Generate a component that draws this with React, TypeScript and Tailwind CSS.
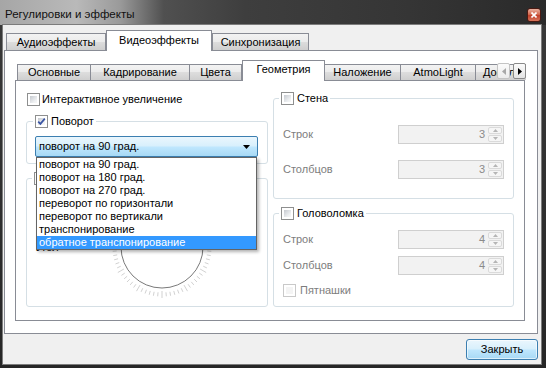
import React from 'react';

const Check = ({ checked = false, disabled = false }: { checked?: boolean; disabled?: boolean }) => (
  <div
    className={`relative w-[13px] h-[13px] shrink-0 border p-[2px] bg-white ${
      disabled ? 'border-[#c9c9c9]' : 'border-[#8e8f8f]'
    }`}
  >
    <div
      className={`w-full h-full ${
        disabled ? 'bg-[#f4f4f4]' : 'bg-[linear-gradient(135deg,#c6cad0,#eef0f2_70%,#f8f8f8)]'
      }`}
    />
    {checked && (
      <svg className="absolute inset-0" width="11" height="11" viewBox="0 0 11 11">
        <path d="M2.2 5.6 L4.4 7.9 L8.8 2.6" fill="none" stroke="#3a55a4" strokeWidth="1.7" />
      </svg>
    )}
  </div>
);

const Spin = ({ value }: { value: string }) => (
  <div className="w-[106px] h-[19px] flex border border-[#cfcfcf] bg-[#f2f2f2]">
    <div className="flex-1 text-right pr-[3px] leading-[17px] text-[#8a8a8a]">{value}</div>
    <div className="w-[15px] flex flex-col gap-px py-px pr-px">
      <div className="flex-1 flex items-center justify-center border border-[#dadada] rounded-[2px] bg-[#f6f6f6]">
        <svg width="5" height="3" viewBox="0 0 5 3">
          <path d="M0 3 L2.5 0 L5 3Z" fill="#b5b5b5" />
        </svg>
      </div>
      <div className="flex-1 flex items-center justify-center border border-[#dadada] rounded-[2px] bg-[#f6f6f6]">
        <svg width="5" height="3" viewBox="0 0 5 3">
          <path d="M0 0 L2.5 3 L5 0Z" fill="#b5b5b5" />
        </svg>
      </div>
    </div>
  </div>
);

const SpinRow = ({ label, value, className }: { label: string; value: string; className: string }) => (
  <div className={`flex items-center justify-between pl-[9px] pr-[9px] ${className}`}>
    <span className="text-[#7d7d7d]">{label}</span>
    <Spin value={value} />
  </div>
);

const GroupHead = ({ label, checked = false, className = '' }: { label?: string; checked?: boolean; className?: string }) => (
  <div className={`-mt-[7px] w-fit flex items-center gap-[3px] bg-white pl-[2px] pr-[2px] h-[13px] ${className}`}>
    <Check checked={checked} />
    {label && <span className="leading-[13px]">{label}</span>}
  </div>
);

const Dial = () => {
  const ticks = [];
  for (let i = 0; i < 72; i++) {
    const a = (i * 5 * Math.PI) / 180;
    const long = i % 6 === 0;
    const r1 = long ? 44 : 45.5;
    const r2 = long ? 51 : 49.5;
    ticks.push(
      <line
        key={i}
        x1={54 + r1 * Math.sin(a)}
        y1={54 + r1 * Math.cos(a)}
        x2={54 + r2 * Math.sin(a)}
        y2={54 + r2 * Math.cos(a)}
        stroke="#b2b2b2"
        strokeWidth="0.6"
      />
    );
  }
  return (
    <svg width="108" height="108" viewBox="0 0 108 108" className="shrink-0">
      {ticks}
      <circle cx="54" cy="54" r="41" fill="none" stroke="#6a6a6a" strokeWidth="0.9" />
    </svg>
  );
};

const outerTabs = [
  { label: 'Аудиоэффекты', cls: 'w-[100px] h-[17px] border border-b-0' },
  { label: 'Видеоэффекты', cls: 'w-[106px] h-[21px] -mb-px border border-b-0 bg-white relative z-10', sel: true },
  { label: 'Синхронизация', cls: 'w-[97px] h-[17px] border border-b-0' },
];

const innerTabs = [
  { label: 'Основные', cls: 'w-[73px] h-[16px] border-l border-t' },
  { label: 'Кадрирование', cls: 'w-[99px] h-[16px] border-l border-t' },
  { label: 'Цвета', cls: 'w-[53px] h-[16px] border-l border-t border-r' },
  { label: 'Геометрия', cls: 'w-[83px] h-[21px] -mb-px border border-b-0 bg-white relative z-10', sel: true },
  { label: 'Наложение', cls: 'w-[75px] h-[16px] border-t' },
  { label: 'AtmoLight', cls: 'w-[75px] h-[16px] border-l border-t' },
  { label: 'Дополнительно', cls: 'w-[95px] h-[16px] border-l border-t border-r' },
];

const rotations = [
  'поворот на 90 град.',
  'поворот на 180 град.',
  'поворот на 270 град.',
  'переворот по горизонтали',
  'переворот по вертикали',
  'транспонирование',
  'обратное транспонирование',
];

const tabBg = 'bg-[linear-gradient(#f3f3f3,#ebebeb_50%,#dddddd_50%,#cfcfcf)]';

export default function App() {
  return (
    <div className="w-[546px] h-[368px] flex flex-col overflow-hidden bg-[linear-gradient(#3a3a3a,#262626)] font-['Liberation_Sans',Arial,sans-serif] text-[11px] text-black">
      {/* Title bar */}
      <div className="h-[25px] shrink-0 flex bg-[linear-gradient(to_right,#a6a6a6_0%,#b9b9b9_14%,#9a9a9a_22%,#505050_30%,#3e3e3e_45%,#353535_75%,#2a2a2a_100%)]">
        <span className="pl-[5px] pt-[6px] text-[11.5px] leading-[16px] text-[#111]">Регулировки и эффекты</span>
        <div className="ml-auto mr-[5px] mt-[8px] w-[14px] h-[14px] rounded-[3px] border border-[#4a1a12] bg-[linear-gradient(#eab1a0,#d36a50_45%,#c0402a_55%,#d9765c)] flex items-center justify-center">
          <svg width="6" height="6" viewBox="0 0 6 6">
            <path d="M0.5 0.5 L5.5 5.5 M5.5 0.5 L0.5 5.5" stroke="#fff" strokeWidth="1.6" />
          </svg>
        </div>
      </div>

      {/* Client area */}
      <div className="ml-[3px] mr-[5px] h-[339px] bg-[#f0f0f0] flex flex-col shadow-[0_0_0_1px_#7c7c7c]">
        {/* Outer tabs */}
        <div className="h-[25px] flex items-end pl-[3px]">
          {outerTabs.map((t) => (
            <div
              key={t.label}
              className={`flex items-center justify-center border-[#898c95] ${t.cls} ${t.sel ? '' : tabBg}`}
            >
              <span className={t.sel ? 'pb-[2px]' : ''}>{t.label}</span>
            </div>
          ))}
        </div>

        {/* Outer pane */}
        <div className="ml-[1px] w-[534px] h-[284px] border border-[#898c95] bg-white">
          {/* Inner tabs */}
          <div className="relative ml-[10px] w-[511px] h-[29px] flex items-end pl-[2px] overflow-x-clip">
            {innerTabs.map((t) => (
              <div
                key={t.label}
                className={`shrink-0 flex items-center justify-center border-[#898c95] ${t.cls} ${t.sel ? '' : tabBg}`}
              >
                <span className={t.sel ? 'pb-[3px]' : ''}>{t.label}</span>
              </div>
            ))}
            <div className="absolute right-0 top-[12px] flex gap-[3px]">
              <div className="w-[13px] h-[16px] rounded-[2px] border border-[#c4c4c4] bg-[linear-gradient(#fbfbfb,#ececec)] flex items-center justify-center">
                <svg width="4" height="7" viewBox="0 0 4 7">
                  <path d="M4 0 L0 3.5 L4 7Z" fill="#a8a8a8" />
                </svg>
              </div>
              <div className="w-[13px] h-[16px] rounded-[2px] border border-[#8a8a8a] bg-[linear-gradient(#fbfbfb,#e4e4e4)] flex items-center justify-center">
                <svg width="4" height="7" viewBox="0 0 4 7">
                  <path d="M0 0 L4 3.5 L0 7Z" fill="#000" />
                </svg>
              </div>
            </div>
          </div>

          {/* Inner pane */}
          <div className="ml-[10px] w-[510px] h-[241px] border border-[#898c95] bg-white flex">
            {/* Left column */}
            <div className="ml-[10px] w-[242px] pt-[12px] flex flex-col">
              <div className="ml-[1px] h-[13px] flex items-center gap-[2px]">
                <Check />
                <span className="leading-[13px]">Интерактивное увеличение</span>
              </div>

              <div className="mt-[15px] border border-[#d5dfe5] rounded-[3px] pb-[6px]">
                <GroupHead label="Поворот" checked className="ml-[6px]" />
                <div className="relative mt-[8px] ml-[8px] w-[223px] h-[21px]">
                  <div className="h-full flex items-center justify-between pl-[3px] pr-[7px] border border-[#3c7fb1] rounded-[2px] bg-[linear-gradient(#eaf6fd,#d9f0fc_45%,#bee6fd_55%,#a7d9f5)]">
                    <span>поворот на 90 град.</span>
                    <svg width="7" height="4" viewBox="0 0 7 4">
                      <path d="M0 0 L7 0 L3.5 4Z" fill="#000" />
                    </svg>
                  </div>
                  <div className="absolute left-[1px] top-[21px] w-[221px] z-20 border border-[#646464] bg-white shadow-[2px_2px_3px_rgba(0,0,0,0.3)]">
                    {rotations.map((r, i) => (
                      <div
                        key={r}
                        className={`h-[13px] leading-[13px] pl-[2px] ${i === rotations.length - 1 ? 'bg-[#3399ff] text-white' : ''}`}
                      >
                        {r}
                      </div>
                    ))}
                  </div>
                </div>
              </div>

              <div className="mt-[14px] h-[129px] border border-[#d5dfe5] rounded-[3px]">
                <GroupHead className="ml-[5px]" />
                <div className="mt-[8px] h-[108px] flex items-center">
                  <span className="ml-[9px] w-[72px]">Угол</span>
                  <Dial />
                </div>
              </div>
            </div>

            {/* Right column */}
            <div className="ml-[5px] w-[241px] pt-[17px] flex flex-col">
              <div className="border border-[#d5dfe5] rounded-[3px] pb-[19px]">
                <GroupHead label="Стена" className="ml-[5px]" />
                <SpinRow label="Строк" value="3" className="mt-[20px]" />
                <SpinRow label="Столбцов" value="3" className="mt-[16px]" />
              </div>

              <div className="mt-[14px] border border-[#d5dfe5] rounded-[3px] pb-[9px]">
                <GroupHead label="Головоломка" className="ml-[5px]" />
                <SpinRow label="Строк" value="4" className="mt-[10px]" />
                <SpinRow label="Столбцов" value="4" className="mt-[7px]" />
                <div className="mt-[9px] pl-[9px] h-[13px] flex items-center gap-[4px]">
                  <Check disabled />
                  <span className="leading-[13px] text-[#7d7d7d]">Пятнашки</span>
                </div>
              </div>
            </div>
          </div>
        </div>

        {/* Footer */}
        <div className="mt-[5px] flex justify-end pr-[3px]">
          <button className="w-[72px] h-[21px] border border-[#3c7fb1] rounded-[3px] bg-[linear-gradient(#eaf6fd,#d9f0fc_45%,#bee6fd_55%,#a7d9f5)] shadow-[inset_0_0_0_1px_rgba(255,255,255,0.6)] text-[11px] leading-[19px]">
            Закрыть
          </button>
        </div>
      </div>
    </div>
  );
}
